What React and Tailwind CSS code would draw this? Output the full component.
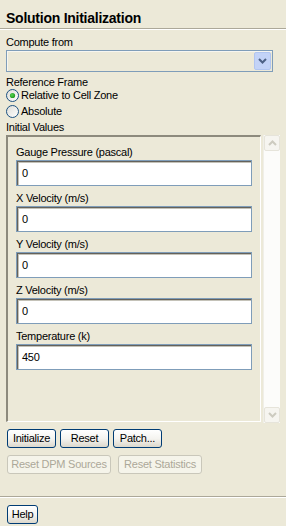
import React from 'react';

const fields = [
  { label: 'Gauge Pressure (pascal)', value: '0' },
  { label: 'X Velocity (m/s)', value: '0' },
  { label: 'Y Velocity (m/s)', value: '0' },
  { label: 'Z Velocity (m/s)', value: '0' },
  { label: 'Temperature (k)', value: '450' },
];

const Radio = ({ checked, label }) => (
  <label className="flex items-center h-[14px] gap-[2px]">
    <svg width="13" height="13" viewBox="0 0 13 13" className="shrink-0">
      <defs>
        <linearGradient id="rfill" x1="0" y1="0" x2="1" y2="1">
          <stop offset="0" stopColor="#dcdcd7" />
          <stop offset="1" stopColor="#ffffff" />
        </linearGradient>
        <radialGradient id="rdot" cx="0.4" cy="0.4" r="0.6">
          <stop offset="0" stopColor="#55d451" />
          <stop offset="1" stopColor="#219a21" />
        </radialGradient>
      </defs>
      <circle cx="6.5" cy="6.5" r="6" fill="url(#rfill)" stroke="#1c5180" strokeWidth="1" />
      {checked && <circle cx="6.5" cy="6.5" r="2.6" fill="url(#rdot)" />}
    </svg>
    <span>{label}</span>
  </label>
);

const Button = ({ text, width, disabled }) => (
  <button
    className={
      disabled
        ? 'h-[19px] rounded-[3px] border border-[#c9c7ba] bg-[#f5f4ea] text-[#aca899] leading-[17px] text-center'
        : 'h-[19px] rounded-[3px] border border-[#003c74] bg-gradient-to-b from-white via-[#f5f4f0] to-[#dcd8cc] text-black leading-[17px] text-center'
    }
    style={{ width }}
  >
    {text}
  </button>
);

const ScrollArrow = ({ up }) => (
  <div className="w-[16px] h-[16px] rounded-[2px] border border-[#e6e4da] bg-[#f6f5f0] flex items-center justify-center">
    <svg width="9" height="6" viewBox="0 0 9 6">
      <path
        d={up ? 'M1 5 L4.5 1.5 L8 5' : 'M1 1 L4.5 4.5 L8 1'}
        fill="none"
        stroke="#cdcbc0"
        strokeWidth="2"
      />
    </svg>
  </div>
);

const Separator = () => (
  <div className="h-[2px] border-t border-[#aca899] border-b border-b-white" />
);

export default function App() {
  return (
    <div className="w-[286px] h-[526px] bg-[#ece9d8] text-black text-[11px] tracking-[-0.25px] leading-[13px] font-['Liberation_Sans',Arial,sans-serif] flex flex-col overflow-hidden">
      <div className="px-[6px] pt-[10px] h-[28px] text-[14px] leading-[16px] font-bold">
        Solution Initialization
      </div>
      <Separator />

      <div className="px-[6px] flex flex-col">
        <div className="mt-[6px]">Compute from</div>
        <div className="mt-[1px] w-[267px] h-[22px] border border-[#7f9db9] bg-[#ece9d8] flex justify-end items-center pr-[1px] shadow-[inset_1px_1px_0_#f7f6f0]">
          <div className="w-[17px] h-[18px] rounded-[2px] bg-[#c3d3f7] border border-[#b1c5f0] flex items-center justify-center">
            <svg width="9" height="6" viewBox="0 0 9 6">
              <path d="M1 1 L4.5 4.5 L8 1" fill="none" stroke="#4d6185" strokeWidth="2" />
            </svg>
          </div>
        </div>

        <div className="mt-[4px]">Reference Frame</div>
        <div className="mt-[-1px] flex flex-col gap-[2px]">
          <Radio checked label="Relative to Cell Zone" />
          <Radio label="Absolute" />
        </div>
        <div className="mt-[3px]">Initial Values</div>

        <div className="mt-[1px] flex gap-[2px] h-[288px]">
          <div className="w-[256px] h-[287px] border-t-2 border-l-2 border-[#8d8a7d] border-r border-b border-r-white border-b-white px-[8px] pt-[9px] flex flex-col gap-[6px]">
            {fields.map((f) => (
              <div key={f.label} className="flex flex-col">
                <div>{f.label}</div>
                <div className="mt-[1px] w-[236px] h-[26px] border border-[#7f9db9] bg-white shadow-[inset_1px_1px_0_#64625c,inset_2px_2px_0_#c4c2b8] pl-[5px] flex items-center">
                  {f.value}
                </div>
              </div>
            ))}
          </div>
          <div className="w-[17px] h-[288px] bg-[#fcfcfa] border-l border-[#f0efe8] flex flex-col justify-between">
            <ScrollArrow up />
            <ScrollArrow />
          </div>
        </div>

        <div className="mt-[6px] ml-[1px] flex gap-[4px]">
          <Button text="Initialize" width={49} />
          <Button text="Reset" width={49} />
          <Button text="Patch..." width={49} />
        </div>
        <div className="mt-[7px] ml-[1px] flex gap-[7px]">
          <Button text="Reset DPM Sources" width={104} disabled />
          <Button text="Reset Statistics" width={84} disabled />
        </div>
      </div>

      <div className="mt-[22px]">
        <Separator />
      </div>
      <div className="px-[7px] mt-[7px]">
        <Button text="Help" width={31} />
      </div>
    </div>
  );
}
